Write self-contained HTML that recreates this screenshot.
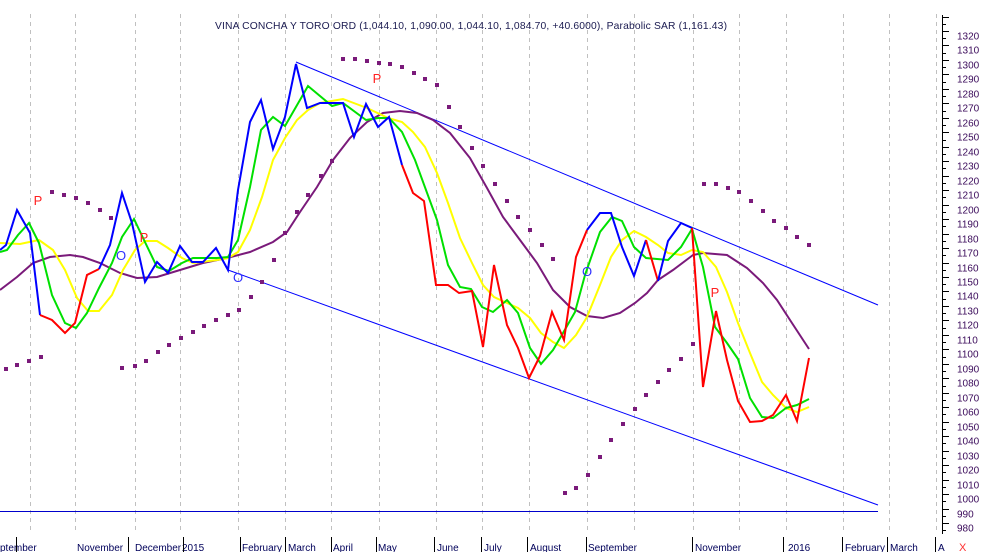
<!DOCTYPE html>
<html><head><style>
html,body{margin:0;padding:0;background:#fff;}
svg{display:block;font-family:"Liberation Sans",sans-serif;}
</style></head><body>
<svg width="984" height="552" viewBox="0 0 984 552" xmlns="http://www.w3.org/2000/svg">
<rect width="984" height="552" fill="#fff"/>
<g stroke="#c0c0c0" stroke-width="1" stroke-dasharray="4,4">
<line x1="30.5" y1="14" x2="30.5" y2="532"/><line x1="75.5" y1="14" x2="75.5" y2="532"/>
<line x1="135.5" y1="14" x2="135.5" y2="532"/><line x1="180.5" y1="14" x2="180.5" y2="532"/>
<line x1="238.5" y1="14" x2="238.5" y2="532"/><line x1="285.5" y1="14" x2="285.5" y2="532"/>
<line x1="331.5" y1="14" x2="331.5" y2="532"/><line x1="379.5" y1="14" x2="379.5" y2="532"/>
<line x1="436.5" y1="14" x2="436.5" y2="532"/><line x1="482.5" y1="14" x2="482.5" y2="532"/>
<line x1="529.5" y1="14" x2="529.5" y2="532"/><line x1="587.5" y1="14" x2="587.5" y2="532"/>
<line x1="634.5" y1="14" x2="634.5" y2="532"/><line x1="693.5" y1="14" x2="693.5" y2="532"/>
<line x1="739.5" y1="14" x2="739.5" y2="532"/><line x1="786.5" y1="14" x2="786.5" y2="532"/>
<line x1="843.5" y1="14" x2="843.5" y2="532"/><line x1="889.5" y1="14" x2="889.5" y2="532"/>
<line x1="936.5" y1="14" x2="936.5" y2="532"/>
</g>
<text x="215" y="29" font-size="10.3" fill="#1a1a50" textLength="512">VINA CONCHA Y TORO ORD (1,044.10, 1,090.00, 1,044.10, 1,084.70, +40.6000), Parabolic SAR (1,161.43)</text>
<g stroke="#0000ff" stroke-width="1" fill="none">
<line x1="296" y1="62" x2="878" y2="305"/>
<line x1="228" y1="270" x2="878" y2="505"/>
<line x1="0" y1="511.5" x2="878" y2="511.5" stroke="#0000cc"/>
</g>
<g fill="none" stroke-width="2" stroke-linejoin="miter">
<polyline stroke="#7a1a7a" points="0,290 17,277 33,263 50,257 70,255 83,257 100,263 120,273 137,278 157,277 180,270 203,263 227,258 250,252 273,242 287,232 300,212 317,187 333,160 350,138 367,122 383,113 400,111 417,113 433,120 450,133 470,158 487,188 503,217 520,240 537,263 553,290 570,307 587,316 603,318 620,313 635,303 647,293 658,280 673,270 693,255 703,253 727,255 747,268 763,283 777,300 790,320 809,349"/>
<polyline stroke="#ffff00" points="0,243 20,244 39,240 53,250 65,270 77,298 88,311 99,311 112,295 123,270 135,250 145,241 157,241 168,248 182,258 193,263 217,260 228,258 238,252 250,230 262,197 273,160 285,138 297,120 308,110 320,103 343,99 367,108 388,118 402,122 413,132 425,147 437,173 448,203 460,238 472,263 483,285 494,297 507,303 518,308 530,318 541,333 553,342 564,348 576,335 587,317 600,285 611,257 622,240 634,231 646,237 658,245 668,253 681,255 692,250 703,252 716,267 727,292 738,323 750,353 762,382 773,395 786,408 797,412 809,407"/>
<polyline stroke="#00e000" points="0,252 7,250 18,235 29,223 39,243 52,295 65,323 76,328 87,313 99,288 112,263 122,237 134,219 144,240 157,267 169,271 182,263 193,258 217,258 228,257 238,240 250,187 261,130 273,117 285,126 308,86 332,106 343,103 366,120 378,118 389,118 402,132 415,160 437,220 448,265 460,287 471,289 482,307 493,312 507,300 518,313 530,348 541,364 553,350 563,333 575,312 585,275 600,232 612,217 622,221 634,247 646,258 668,260 681,247 692,229 703,267 715,327 727,343 738,359 750,398 762,417 773,418 786,408 797,405 809,399"/>
<polyline stroke="#0000ff" points="0,250 6,245 17,210 30,233 40,315"/>
<polyline stroke="#ff0000" points="40,315 52,320 65,333 75,323 87,275 99,269"/>
<polyline stroke="#0000ff" points="99,269 110,245 122,193 132,223 145,282 157,262 168,273 180,246 192,262 203,262 216,248 228,270 238,190 250,122 261,100 273,149 285,117 296,64 307,108 320,103 343,103 354,137 366,104 378,127 389,117 402,165"/>
<polyline stroke="#ff0000" points="402,165 413,193 424,201 436,285 448,285 459,293 472,291 483,347 494,265 507,325 518,348 529,378 540,356 552,312 564,340 576,257 587,230"/>
<polyline stroke="#0000ff" points="587,230 600,213 611,213 622,247 634,276 646,240"/>
<polyline stroke="#ff0000" points="646,240 658,281"/>
<polyline stroke="#0000ff" points="658,281 668,241 681,223 692,228"/>
<polyline stroke="#ff0000" points="692,228 703,387 716,311 727,360 738,401 750,422 762,421 773,415 786,395 797,421 809,358"/>
</g>
<g fill="#7a1a7a">
<rect x="4" y="367" width="4" height="4"/><rect x="15" y="363" width="4" height="4"/><rect x="27" y="359" width="4" height="4"/><rect x="39" y="355" width="4" height="4"/>
<rect x="50" y="190" width="4" height="4"/><rect x="62" y="193" width="4" height="4"/><rect x="74" y="196" width="4" height="4"/><rect x="86" y="201" width="4" height="4"/><rect x="98" y="208" width="4" height="4"/><rect x="109" y="216" width="4" height="4"/>
<rect x="120" y="366" width="4" height="4"/><rect x="133" y="364" width="4" height="4"/><rect x="144" y="359" width="4" height="4"/><rect x="156" y="350" width="4" height="4"/><rect x="167" y="343" width="4" height="4"/><rect x="179" y="336" width="4" height="4"/><rect x="191" y="330" width="4" height="4"/><rect x="202" y="324" width="4" height="4"/><rect x="214" y="318" width="4" height="4"/><rect x="226" y="313" width="4" height="4"/><rect x="237" y="308" width="4" height="4"/><rect x="249" y="295" width="4" height="4"/><rect x="260" y="280" width="4" height="4"/><rect x="272" y="258" width="4" height="4"/><rect x="283" y="231" width="4" height="4"/><rect x="295" y="210" width="4" height="4"/><rect x="306" y="193" width="4" height="4"/><rect x="319" y="174" width="4" height="4"/><rect x="330" y="159" width="4" height="4"/>
<rect x="341" y="57" width="4" height="4"/><rect x="353" y="57" width="4" height="4"/><rect x="365" y="59" width="4" height="4"/><rect x="377" y="61" width="4" height="4"/><rect x="388" y="62" width="4" height="4"/><rect x="400" y="65" width="4" height="4"/><rect x="412" y="71" width="4" height="4"/><rect x="423" y="77" width="4" height="4"/><rect x="435" y="83" width="4" height="4"/><rect x="447" y="105" width="4" height="4"/><rect x="458" y="125" width="4" height="4"/><rect x="470" y="146" width="4" height="4"/><rect x="481" y="164" width="4" height="4"/><rect x="493" y="182" width="4" height="4"/><rect x="505" y="199" width="4" height="4"/><rect x="516" y="215" width="4" height="4"/><rect x="528" y="228" width="4" height="4"/><rect x="540" y="243" width="4" height="4"/><rect x="551" y="257" width="4" height="4"/>
<rect x="563" y="491" width="4" height="4"/><rect x="574" y="486" width="4" height="4"/><rect x="586" y="473" width="4" height="4"/><rect x="598" y="455" width="4" height="4"/><rect x="609" y="438" width="4" height="4"/><rect x="621" y="422" width="4" height="4"/><rect x="633" y="407" width="4" height="4"/><rect x="644" y="393" width="4" height="4"/><rect x="656" y="380" width="4" height="4"/><rect x="667" y="368" width="4" height="4"/><rect x="679" y="357" width="4" height="4"/><rect x="691" y="342" width="4" height="4"/>
<rect x="702" y="182" width="4" height="4"/><rect x="714" y="182" width="4" height="4"/><rect x="726" y="186" width="4" height="4"/><rect x="737" y="190" width="4" height="4"/><rect x="749" y="199" width="4" height="4"/><rect x="761" y="209" width="4" height="4"/><rect x="772" y="219" width="4" height="4"/><rect x="784" y="226" width="4" height="4"/><rect x="795" y="235" width="4" height="4"/><rect x="807" y="243" width="4" height="4"/>
</g>
<g font-size="13" text-anchor="middle">
<text x="38" y="205" fill="#ff2020">P</text>
<text x="121" y="260" fill="#3030ff">O</text>
<text x="144" y="242" fill="#ff2020">P</text>
<text x="238" y="282" fill="#3030ff">O</text>
<text x="377" y="83" fill="#ff2020">P</text>
<text x="587" y="276" fill="#3030ff">O</text>
<text x="715" y="297" fill="#ff2020">P</text>
</g>
<line x1="942.5" y1="15" x2="942.5" y2="534" stroke="#000" stroke-width="1"/>
<g stroke="#000" stroke-width="1" id="ticks"></g>
<g font-size="10" fill="#3a0a5a" id="ylab"></g>
<g font-size="10" fill="#00005a" id="xlab">
<text x="0" y="551">ptember</text><text x="77" y="551">November</text><text x="135" y="551">December</text><text x="182" y="551">2015</text>
<text x="242" y="551">February</text><text x="288" y="551">March</text><text x="333" y="551">April</text><text x="378" y="551">May</text>
<text x="437" y="551">June</text><text x="484" y="551">July</text><text x="530" y="551">August</text><text x="588" y="551">September</text>
<text x="695" y="551">November</text><text x="788" y="551">2016</text><text x="845" y="551">February</text><text x="890" y="551">March</text><text x="938" y="551">A</text>
</g>
<text x="959" y="551" font-size="11" fill="#ff3030">X</text>
<g stroke="#000" stroke-width="1">
<line x1="16.5" y1="537" x2="16.5" y2="552"/><line x1="128.5" y1="537" x2="128.5" y2="552"/><line x1="183.5" y1="537" x2="183.5" y2="552"/>
<line x1="240.5" y1="537" x2="240.5" y2="552"/><line x1="285.5" y1="537" x2="285.5" y2="552"/><line x1="331.5" y1="537" x2="331.5" y2="552"/>
<line x1="376.5" y1="537" x2="376.5" y2="552"/><line x1="434.5" y1="537" x2="434.5" y2="552"/><line x1="481.5" y1="537" x2="481.5" y2="552"/>
<line x1="527.5" y1="537" x2="527.5" y2="552"/><line x1="586.5" y1="537" x2="586.5" y2="552"/>
<line x1="692.5" y1="537" x2="692.5" y2="552"/><line x1="783.5" y1="537" x2="783.5" y2="552"/>
<line x1="842.5" y1="537" x2="842.5" y2="552"/><line x1="887.5" y1="537" x2="887.5" y2="552"/><line x1="935.5" y1="537" x2="935.5" y2="552"/>
</g>
<script>
var t=document.getElementById('ticks'),l=document.getElementById('ylab'),ns='http://www.w3.org/2000/svg';
for(var p=1330;p>=970;p-=5){var y=Math.round(35+(1320-p)*1.447)+0.5-4;if(y<15||y>534)continue;
var ln=document.createElementNS(ns,'line');ln.setAttribute('x1',942);ln.setAttribute('x2',p%10==0?949:946);ln.setAttribute('y1',y);ln.setAttribute('y2',y);t.appendChild(ln);
if(p%10==0&&p<=1320&&p>=980){var tx=document.createElementNS(ns,'text');tx.setAttribute('x',957);tx.setAttribute('y',y+8);tx.textContent=p;l.appendChild(tx);}}
</script>
</svg>
</body></html>
